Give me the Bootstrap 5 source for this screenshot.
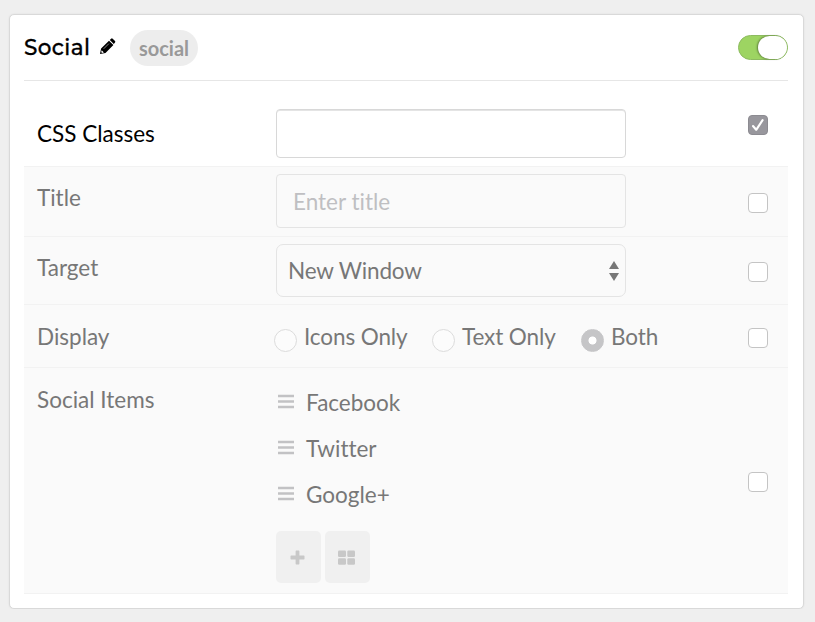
<!DOCTYPE html>
<html lang="en">
<head>
<meta charset="utf-8">
<meta name="viewport" content="width=device-width, initial-scale=1">
<title>Social</title>
<link href="https://cdn.jsdelivr.net/npm/bootstrap@5.3.0/dist/css/bootstrap.min.css" rel="stylesheet">
<style>
body{background:#efefef;font-family:Lato,sans-serif;font-size:22.5px;line-height:30px;color:#777;overflow:hidden}
body,.field,.field::placeholder{font-variant-ligatures:none;font-feature-settings:"liga" 0,"clig" 0,"dlig" 0}
.panel{width:795px;height:595px;margin:14px 0 0 9px;border:1px solid #d9d9d9;border-radius:5px;padding:0 15px 0 14px;box-shadow:0 0 2px rgba(0,0,0,.08)}
.panel-head{height:66px;border-bottom:1px solid #e6e6e6}
.panel-title{font:500 21.5px/30px Montserrat,Inter,sans-serif;-webkit-text-stroke:.3px #000;color:#000;letter-spacing:.4px;margin:-2px 0 0;width:66px;white-space:nowrap}
.pencil{margin:-3px 0 0 9px}
.tag{background:#ededed;color:#999;font-weight:700;font-size:20px;border-radius:18px;width:68px;height:36px;margin:0 0 0 14px;line-height:36px;text-align:center}
.switch{width:50px;height:25px;border-radius:13px;background:#9dd462;border:1px solid #8dbb60;padding:0}
.switch-knob{width:29px;height:23px;border-radius:12px;background:#fff;box-shadow:-1px 0 2px rgba(0,0,0,.4)}
.setting{background:#fafafa;border-top:1px solid #f2f2f2;padding-left:13px;padding-right:20px}
.setting.active-row{background:#fff;border:0;color:#000;height:85px}
.r-title{height:70px}.r-target{height:68px}.r-display{height:63px}.r-items{height:227px;border-bottom:1px solid #f2f2f2}
.name{width:239px;flex:none}
.active-row .name{padding-top:38px}.r-title .name{padding-top:16px}.r-target .name{padding-top:16px}.r-display .name{padding-top:17px}.r-items .name{padding-top:17px}
.form-control.field{width:350px;font-size:22.5px;line-height:30px;color:#777;background:#fafafa;border:1px solid #e4e4e4;border-radius:4px;padding:1px 16px 0;box-shadow:none}
.active-row .field.form-control{background:#fff;height:49px;margin-top:28px;border-color:#d8d8d8;box-shadow:inset 0 1px 0 #e4e4e4}
.r-title .field.form-control{height:54px;margin-top:7px}
.field::placeholder{color:#bfbfc2;opacity:1}
.picker{width:350px;height:53px;margin-top:7px;border:1px solid #e4e4e4;border-radius:7px;padding:0 5px 0 11px}
.picker-text{margin-top:1px;letter-spacing:-.15px}
.form-check-input.tick{width:20px;height:20px;margin:0;border:1px solid #c4c4c4;border-radius:4px;background-color:#fff;box-shadow:none;flex:none}
.form-check-input.tick:checked{background-color:#98979d;border-color:#8c8b91;background-image:none}
.tickbox{line-height:0;display:grid}
.tickbox>*{grid-area:1/1}
.checkmark{pointer-events:none;z-index:1}
.active-row .tickbox{padding-top:34px}.r-title .tickbox{padding-top:26px}.r-target .tickbox{padding-top:25px}.r-display .tickbox{padding-top:23px}.r-items .tickbox{padding-top:104px}
.choices{padding-top:17px;margin-left:-2px;letter-spacing:-.1px}
.choice-radio.form-check-input{width:23px;height:23px;margin:7px 7px 0 0;background-color:#fcfcfc;border:1px solid #dcdcdc;flex:none;float:none}
.choice-radio.form-check-input:checked{background:radial-gradient(circle,#fff 0 3.6px,#c5c5c7 4.4px);border-color:#c5c5c7}
.c1{width:158px}.c2{width:149px}
.items{padding-top:20px}
.item-row{height:46px}
.handle{margin:6px 12px 0 2px}
.tool.btn{width:45px;height:52px;background:#f0f0f0;border:0;border-radius:5px;padding:0 2px 0 0;color:#c8c8c8}
.tools{gap:4px;margin-top:5px}
svg{display:block;flex:none}
</style>
<script src="https://cdn.jsdelivr.net/npm/bootstrap@5.3.0/dist/js/bootstrap.bundle.min.js"></script>
</head>
<body>
<main class="panel bg-white">
  <header class="panel-head d-flex align-items-center">
    <h1 class="panel-title">Social</h1>
    <svg class="pencil" width="17" height="17" viewBox="0 0 17 17"><path d="M1 16l1.100-5.400L10 2.700l4.400 4.400-7.900 7.900zM10.800 1.900l1.300-1.200q.8-.7 1.600 0l2.300 2.300q.7.8 0 1.600l-1.200 1.300z" fill="#000"/><path d="M2.700 12.200l2.200 2.200-1.900.5-.8-.8z" fill="#fff"/><path d="M4.700 10.800l5.200-5.200" stroke="#aaa" stroke-width=".8"/></svg>
    <span class="tag">social</span>
    <div class="switch d-flex justify-content-end ms-auto" role="switch" aria-checked="true"><span class="switch-knob"></span></div>
  </header>

  <section class="setting active-row d-flex">
    <label class="name" for="css">CSS Classes</label>
    <input id="css" class="form-control field" type="text">
    <div class="tickbox align-content-start ms-auto"><input class="form-check-input tick" type="checkbox" checked><svg class="checkmark" width="20" height="20" viewBox="0 0 20 20"><path d="M5 11l3.200 3.800L14.600 5.200" fill="none" stroke="#fff" stroke-width="2.100" stroke-linecap="round" stroke-linejoin="round"/></svg></div>
  </section>

  <section class="setting r-title d-flex">
    <label class="name" for="ttl">Title</label>
    <input id="ttl" class="form-control field" type="text" placeholder="Enter title">
    <div class="tickbox align-content-start ms-auto"><input class="form-check-input tick" type="checkbox"></div>
  </section>

  <section class="setting r-target d-flex">
    <span class="name">Target</span>
    <div class="picker d-flex align-items-center justify-content-between" role="combobox">
      <span class="picker-text">New Window</span>
      <svg width="12" height="20" viewBox="0 0 12 20" fill="#777"><path d="M6 0l5 8H1zM1 12h10l-5 8z"/></svg>
    </div>
    <div class="tickbox align-content-start ms-auto"><input class="form-check-input tick" type="checkbox"></div>
  </section>

  <section class="setting r-display d-flex">
    <span class="name">Display</span>
    <div class="choices d-flex">
      <label class="c1 d-flex align-items-start"><input class="form-check-input choice-radio" type="radio" name="display">Icons Only</label>
      <label class="c2 d-flex align-items-start"><input class="form-check-input choice-radio" type="radio" name="display">Text Only</label>
      <label class="d-flex align-items-start"><input class="form-check-input choice-radio" type="radio" name="display" checked>Both</label>
    </div>
    <div class="tickbox align-content-start ms-auto"><input class="form-check-input tick" type="checkbox"></div>
  </section>

  <section class="setting r-items d-flex">
    <span class="name">Social Items</span>
    <div class="items">
      <div class="item-row d-flex align-items-start"><svg class="handle" width="16" height="15" viewBox="0 0 16 15"><path d="M0 2h16M0 7.5h16M0 13h16" stroke="#c2c2c4" stroke-width="2.4"/></svg>Facebook</div>
      <div class="item-row d-flex align-items-start"><svg class="handle" width="16" height="15" viewBox="0 0 16 15"><path d="M0 2h16M0 7.5h16M0 13h16" stroke="#c2c2c4" stroke-width="2.4"/></svg>Twitter</div>
      <div class="item-row d-flex align-items-start"><svg class="handle" width="16" height="15" viewBox="0 0 16 15"><path d="M0 2h16M0 7.5h16M0 13h16" stroke="#c2c2c4" stroke-width="2.4"/></svg>Google+</div>
      <div class="tools d-flex">
        <button class="btn tool d-flex align-items-center justify-content-center" type="button" aria-label="Add"><svg width="15" height="15" viewBox="0 0 15 15" fill="currentColor"><path d="M6.3.5h2.4q.7 0 .7.7v4.400h4.400q.7 0 .7.7v2.400q0 .7-.7.7H9.400v4.400q0 .7-.7.7H6.300q-.7 0-.7-.7V9.400H1.200q-.7 0-.7-.7V6.300q0-.7.7-.7h4.400V1.200q0-.7.7-.7z"/></svg></button>
        <button class="btn tool d-flex align-items-center justify-content-center" type="button" aria-label="Grid"><svg width="17" height="15" viewBox="0 0 17 15" fill="currentColor"><rect x="0" y=".5" width="8" height="6.400" rx="1.200"/><rect x="9.300" y=".5" width="7.700" height="6.400" rx="1.200"/><rect x="0" y="8.300" width="8" height="6.400" rx="1.200"/><rect x="9.300" y="8.300" width="7.700" height="6.400" rx="1.200"/></svg></button>
      </div>
    </div>
    <div class="tickbox align-content-start ms-auto"><input class="form-check-input tick" type="checkbox"></div>
  </section>
</main>
</body>
</html>
